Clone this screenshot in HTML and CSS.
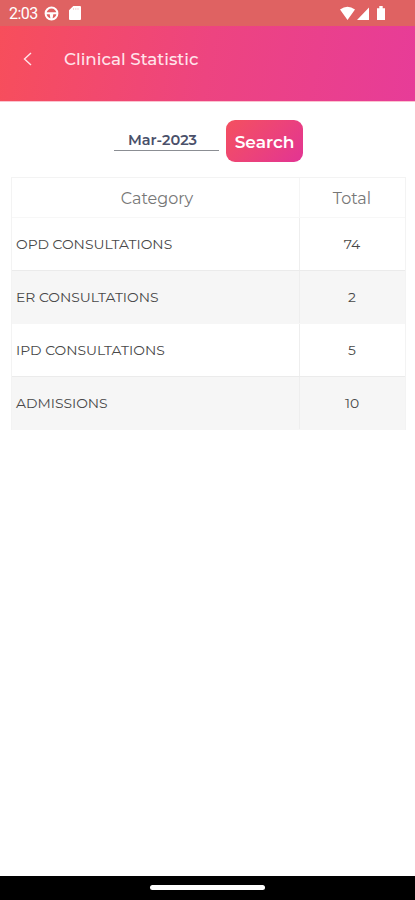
FILE: index.html
```html
<!DOCTYPE html>
<html lang="en">
<head>
<meta charset="utf-8">
<title>Clinical Statistic</title>
<link rel="stylesheet" href="styles.css">
</head>
<body>
<div class="status">
  <span class="time">2:03</span>
  <svg class="wheel" width="15" height="15" viewBox="0 0 15 15"><circle cx="7.5" cy="7.5" r="5.900" fill="none" stroke="#fff" stroke-width="2"/><path d="M2 6.300h11v2H9.300L8.500 13h-2l-.8-4.700H2z" fill="#fff"/></svg>
  <svg class="card" width="12" height="14" viewBox="0 0 12 14"><path d="M4.300 0H11q1 0 1 1v12q0 1-1 1H1q-1 0-1-1V4.300z" fill="#fff"/><path d="M4.500 2v2M6.800 2v2M9 2v2" stroke="#f3cccc" stroke-width=".8"/></svg>
  <svg class="signals" width="48" height="15" viewBox="0 0 48 15"><path d="M1 3.500Q8.500 -2 16 3.500L8.500 14zM18 14L30 1.500V14zM38 2.200h2.300V0h3.400v2.200H46V14h-8z" fill="#fff"/></svg>
</div>
<header class="header">
  <svg width="9" height="14" viewBox="0 0 9 14"><path d="M8 1L1.500 7 8 13" fill="none" stroke="#ffe3e8" stroke-width="1.400"/></svg>
  <h1 class="title">Clinical Statistic</h1>
</header>
<main class="main">
  <div class="filter">
    <div class="month"><span>Mar-2023</span></div>
    <button class="search">Search</button>
  </div>
  <div class="table">
    <div class="row head"><div class="cell">Category</div><div class="cell num">Total</div></div>
    <div class="row"><div class="cell">OPD CONSULTATIONS</div><div class="cell num">74</div></div>
    <div class="row alt"><div class="cell">ER CONSULTATIONS</div><div class="cell num">2</div></div>
    <div class="row"><div class="cell">IPD CONSULTATIONS</div><div class="cell num">5</div></div>
    <div class="row alt"><div class="cell">ADMISSIONS</div><div class="cell num">10</div></div>
  </div>
</main>
<footer class="nav"><div class="pill"></div></footer>
</body>
</html>
```
FILE: styles.css
```css
* { box-sizing: border-box; }
body {
  margin: 0;
  height: 900px;
  display: flex;
  flex-direction: column;
  overflow: hidden;
  background: #fff;
  font-family: Montserrat, Inter, sans-serif;
}
.status {
  height: 26px;
  flex: none;
  display: flex;
  align-items: center;
  padding: 1px 28px 0 9px;
  background: #df6262;
}
.time { width: 35px; font: 16px/20px Roboto, sans-serif; color: #fff; letter-spacing: -0.5px; }
.card { margin-left: 10px; margin-top: -1px; }
.signals { margin-left: auto; }
.header {
  height: 76px;
  flex: none;
  display: flex;
  align-items: center;
  padding: 0 0 9px 23px;
  border-bottom: 1px solid #fbc3cf;
  background: linear-gradient(100deg, #f74e5b 0%, #ed4480 50%, #e73c98 100%);
}
.title { margin: 0 0 0 32px; font-size: 16.8px; line-height: 24px; font-weight: 500; color: #ffe4eb; }
.main { flex: 1; padding: 18px 9px 0 11px; }
.filter { display: flex; padding-left: 103px; height: 42px; }
.month {
  width: 105px;
  height: 31px;
  margin-right: 7px;
  padding-top: 10px;
  border-bottom: 1px solid #8b8e93;
  text-align: center;
  font-size: 14.5px;
  line-height: 20px;
  font-weight: 600;
  color: #4a506a;
}
.month span { margin-right: 8px; }
.search {
  width: 77px;
  height: 42px;
  padding: 1px 0 0;
  border: 0;
  border-radius: 9px;
  background: linear-gradient(135deg, #f4505f 0%, #ec4379 50%, #e23494 100%);
  color: #fff;
  font: 600 17px/24px Montserrat, Inter, sans-serif;
}
.table { margin-top: 15px; border: 1px solid #f3f3f3; border-bottom: 0; }
.row { display: grid; grid-template-columns: 288px 1fr; height: 53px; border-bottom: 1px solid #ebebeb; color: #484848; font-size: 13.9px; }
.row.head { height: 40px; border-color: #f7f7f7; color: #777; font-size: 16px; }
.row.alt { background: #f6f6f6; border-color: #f6f6f6; }
.cell { display: flex; align-items: center; padding-left: 4px; border-right: 1px solid #eee; }
.head .cell { justify-content: center; padding: 2px 0 0 3px; border-color: #f5f5f5; }
.row .cell.num { justify-content: center; padding-left: 0; padding-right: 1px; border-right: 0; }
.nav { height: 24px; flex: none; display: flex; justify-content: center; align-items: center; background: #000; }
.pill { width: 115px; height: 5px; margin-bottom: 1px; border-radius: 3px; background: #fff; }
```
